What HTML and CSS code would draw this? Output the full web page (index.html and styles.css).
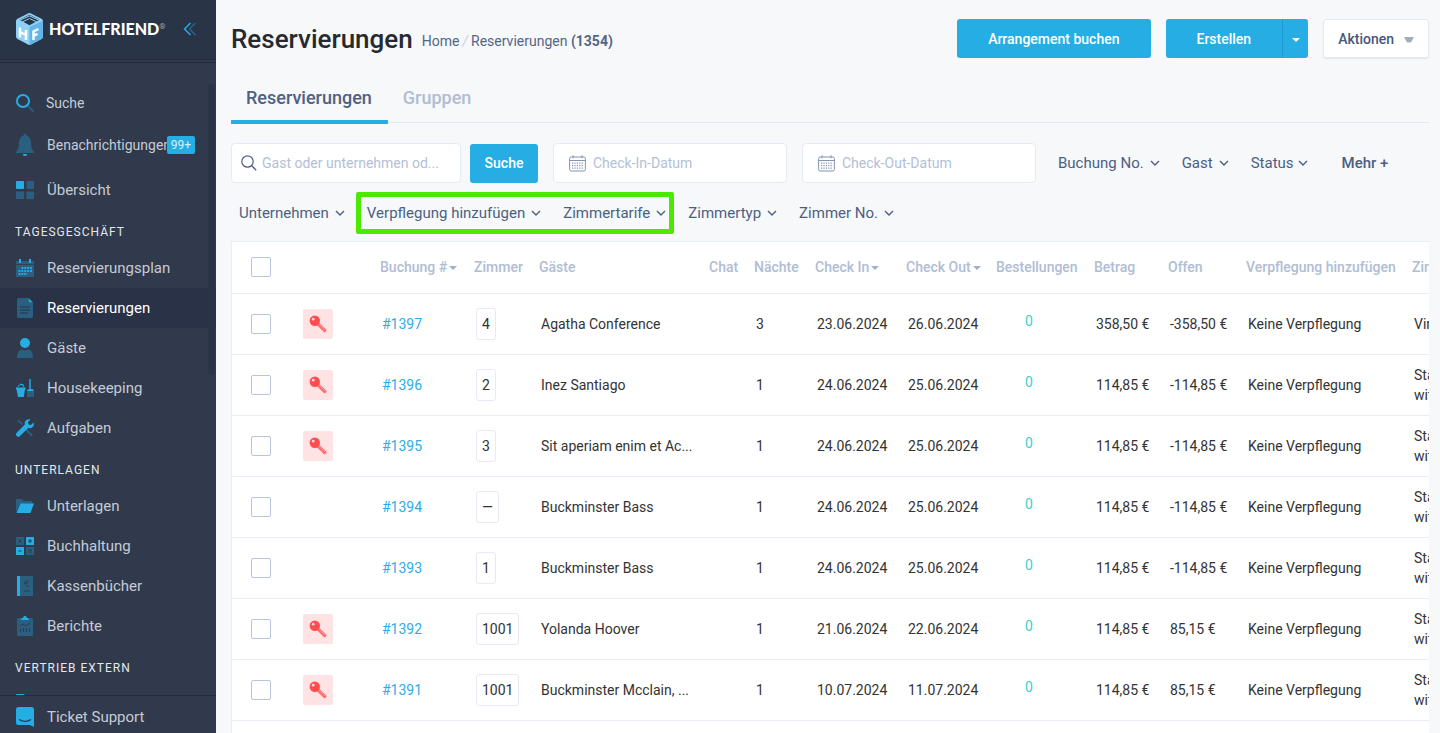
FILE: index.html
```html
<!DOCTYPE html>
<html lang="de">
<head>
<meta charset="utf-8">
<meta name="viewport" content="width=device-width, initial-scale=1">
<title>Reservierungen</title>
<link rel="stylesheet" href="styles.css">
</head>
<body>
<svg class="sprite" aria-hidden="true">
  <symbol id="chevron" viewBox="0 0 10 6"><path d="M1 1l4 4 4-4" fill="none" stroke="currentColor" stroke-width="1.4"/></symbol>
  <symbol id="caret" viewBox="0 0 8 4"><path d="M0 0h8L4 4z" fill="currentColor"/></symbol>
  <symbol id="calendar" viewBox="0 0 17 17"><rect x=".6" y="2" width="15.8" height="14" rx="1.5" fill="none" stroke="currentColor"/><path d="M1 5.5h15M4 .3v3M13 .3v3" stroke="currentColor" fill="none"/><path d="M3 8.2h11M3 10.7h11M3 13.2h11" stroke="currentColor" stroke-width="1.2" stroke-dasharray="1.2 1.2" fill="none"/></symbol>
  <symbol id="key" viewBox="0 0 18 18"><path d="M8.500 8.500l7.300 7" stroke="#ff6b6c" stroke-width="3.200" stroke-linecap="round"/><path d="M9.500 8.800l6.500 6.200" stroke="#ffa3a3" stroke-width=".8"/><circle cx="5.800" cy="5.800" r="5.200" fill="#ff4d4f"/><circle cx="4.200" cy="4.200" r="1.400" fill="#ffd5d5"/></symbol>
</svg>
<div class="app">
  <aside class="sidebar">
    <div class="brand">
      <svg class="brand-mark" viewBox="0 0 27 32" aria-hidden="true">
        <path d="M12 .4a3 3 0 0 1 3 0l10.500 5.300A2.500 2.500 0 0 1 27 8v15.500a3 3 0 0 1-1.500 2.500L15 31.600a3 3 0 0 1-3 0L1.500 26A3 3 0 0 1 0 23.500V8a2.500 2.500 0 0 1 1.500-2.300z" fill="#8fd0f5"/>
        <path d="M13.500 14L27 8v15.500a3 3 0 0 1-1.500 2.500L15 31.600l-1.500.4z" fill="#62b5e8"/>
        <path d="M13.500 1.800l10 4.900-10 5.600-10-5.600z" fill="#2a3447"/>
        <path d="M4 7.200l9.500-4.300L23 7.200M6 9l7.500-3.500L21 9" fill="none" stroke="#8fd0f5" stroke-width="1"/>
        <path d="M4 14.500v10M10 17v10M4 19l6 3M17.500 27V18.500l5-2.500M17.500 22.800l4-2" fill="none" stroke="#fff" stroke-width="2.500"/>
      </svg>
      <span class="brand-name">HOTELFRIEND<sup>®</sup></span>
      <button class="collapse" type="button" aria-label="Menü einklappen">
        <svg viewBox="0 0 14 14"><path d="M7.500 1L1.500 7l6 6" fill="none" stroke="#25ade4" stroke-width="1.500"/><path d="M12.500 1l-6 6 6 6" fill="none" stroke="#2a6487" stroke-width="1.500"/></svg>
      </button>
    </div>
    <nav class="nav">
      <a class="item item-search" href="#"><svg viewBox="0 0 18 18"><path d="M12 12l5.500 5.500" stroke="#2b5f80" stroke-width="1.800"/><circle cx="7" cy="7" r="6" fill="none" stroke="#25ade4" stroke-width="2"/></svg><span>Suche</span></a>
      <a class="item item-bell" href="#"><svg class="tall" viewBox="0 0 18 22"><path d="M9 0c.9 0 1.400.7 1.400 1.500C13.500 2.300 15 5 15 8.500c0 5 1 7 3 9.500v1H0v-1c2-2.500 3-4.500 3-9.500C3 5 4.500 2.300 7.600 1.500 7.600.7 8.100 0 9 0z" fill="#2b5f80"/><path d="M6.800 20h4.400a2.200 2 0 0 1-4.400 0z" fill="#25ade4"/></svg><span>Benachrichtigungen</span><b class="badge">99+</b></a>
      <a class="item" href="#"><svg viewBox="0 0 18 18"><rect width="8" height="8" rx="1" fill="#25ade4"/><path d="M10.500 0H17a1 1 0 0 1 1 1v7h-7.500zM0 10.500h8V18H0zM10.500 10.500H18V18h-7.500z" fill="#2b5f80"/></svg><span>Übersicht</span></a>
      <h2 class="group">TAGESGESCHÄFT</h2>
      <a class="item" href="#"><svg viewBox="0 0 18 18"><path d="M0 2h18v16H0z" fill="#2b5f80"/><path d="M0 5.500h18" stroke="#303a4c" stroke-width=".8"/><path d="M4 0v4M14 0v4" stroke="#25ade4" stroke-width="2"/><path d="M5.500 9H16M2.500 12H16M2.500 15h9" stroke="#25ade4" stroke-width="1.800" stroke-dasharray="1.900 1"/></svg><span>Reservierungsplan</span></a>
      <a class="item active" href="#" aria-current="page"><svg viewBox="0 0 18 20"><path d="M1 1.500A1.500 1.500 0 0 1 2.500 0H12v5h5v13.500a1.500 1.500 0 0 1-1.500 1.500h-13A1.500 1.500 0 0 1 1 18.500z" fill="#2b5f80"/><path d="M12.500 0L17 4.500h-4.500z" fill="#25ade4"/><path d="M4 9h10M4 12h10M4 15h8" stroke="#293246" stroke-width="1.200"/></svg><span>Reservierungen</span></a>
      <a class="item" href="#"><svg viewBox="0 0 18 20"><circle cx="9" cy="5" r="5" fill="#25ade4"/><path d="M1 20c0-6 2.500-8.500 5-8.500 2 1.200 4 1.200 6 0 2.500 0 5 2.500 5 8.500z" fill="#2b5f80"/></svg><span>Gäste</span></a>
      <a class="item" href="#"><svg viewBox="0 0 18 18"><path d="M.5 10h8.500l-1.200 8H2z" fill="#25ade4"/><path d="M0 8.500h9.500v2H0z" fill="#25ade4"/><path d="M2 8c0-3 5-3 6 0M4 5l4 1" stroke="#25ade4" fill="none"/><path d="M14 0v11" stroke="#25ade4" stroke-width="1.500"/><path d="M11 12c0-3 7-3 7 0v6h-7z" fill="#2b5f80"/><path d="M11 12c1-3 6-3 7 0z" fill="#25ade4"/></svg><span>Housekeeping</span></a>
      <a class="item" href="#"><svg viewBox="0 0 18 18"><path d="M1 2l2-1 4 4-1 1zM10 9l7 7-1.500 1.500-7-7z" fill="#2b5f80"/><path d="M17.500 3.500L15 6l-2.500-.5L12 3l2.500-2.500C11.500-.6 8 1.500 8.800 5.600L.7 13.800a2.200 2.200 0 0 0 3.300 3.300l8.200-8C16.500 9.900 18.700 6.500 17.500 3.500z" fill="#25ade4"/></svg><span>Aufgaben</span></a>
      <h2 class="group">UNTERLAGEN</h2>
      <a class="item" href="#"><svg viewBox="0 0 18 18"><path d="M0 2h6l1.500 2H16v3L4 8 0 15z" fill="#2b5f80"/><path d="M4.500 6.500H18L14.500 16H.5z" fill="#25ade4"/></svg><span>Unterlagen</span></a>
      <a class="item" href="#"><svg viewBox="0 0 18 18"><path d="M0 0h8v8H0zM10 10h8v8h-8z" fill="#2b5f80"/><path d="M10 0h8v8h-8zM0 10h8v8H0z" fill="#25ade4"/><path d="M12 4h4M14 2v4M2.500 14h3M2.500 2.500l3 3M5.500 2.500l-3 3M12 13h4M12 15h4" stroke="#303a4c" stroke-width="1"/></svg><span>Buchhaltung</span></a>
      <a class="item" href="#"><svg viewBox="0 0 18 20"><path d="M4 0h12a1 1 0 0 1 1 1v18a1 1 0 0 1-1 1H4z" fill="#2b5f80"/><path d="M1 0h3v20H1z" fill="#25ade4"/><path d="M13.500 5.500c-3-2-5 .5-4 3s3 2 4 1M8 7h4M8 15h6" stroke="#303a4c" fill="none" stroke-width="1"/></svg><span>Kassenbücher</span></a>
      <a class="item" href="#"><svg viewBox="0 0 18 20"><path d="M1 3.500A1.500 1.500 0 0 1 2.500 2h13A1.500 1.500 0 0 1 17 3.500v15a1.500 1.500 0 0 1-1.500 1.500h-13A1.500 1.500 0 0 1 1 18.500z" fill="#2b5f80"/><path d="M5 4c0-1.500 1-2 2-2 .5-2.600 3.500-2.600 4 0 1 0 2 .5 2 2z" fill="#25ade4"/><path d="M4 10l3-2 3 2 4-3M4.500 16v-3M7.500 16v-4M10.500 16v-4M13.500 16v-4" stroke="#303a4c" fill="none" stroke-width="1"/></svg><span>Berichte</span></a>
      <h2 class="group">VERTRIEB EXTERN</h2>
      <a class="item" href="#" aria-label="Vertrieb"><svg viewBox="0 0 18 20"><path d="M0 1a1 1 0 0 1 1-1h7l2 3h7v16H0z" fill="#25ade4"/></svg></a>
    </nav>
    <a class="item support" href="#"><svg viewBox="0 0 18 20"><path d="M2.500 0h13A2.500 2.500 0 0 1 18 2.500V20l-4-2H2.500A2.500 2.500 0 0 1 0 15.500v-13A2.500 2.500 0 0 1 2.500 0z" fill="#25ade4"/><path d="M3 12.500c3.500 2.600 8.500 2.600 12 0" stroke="#303a4c" fill="none" stroke-width="1.200"/></svg><span>Ticket Support</span></a>
    <i class="scroll-thumb"></i>
  </aside>

  <main class="main">
    <header class="topbar">
      <h1>Reservierungen</h1>
      <nav class="crumbs"><a href="#">Home</a><i>/</i><span>Reservierungen <b>(1354)</b></span></nav>
      <div class="actions">
        <button class="btn primary wide" type="button">Arrangement buchen</button>
        <div class="split">
          <button class="btn primary create" type="button">Erstellen</button>
          <button class="btn primary more" type="button" aria-label="Weitere Optionen"><svg><use href="#caret"/></svg></button>
        </div>
        <button class="btn ghost" type="button">Aktionen<svg viewBox="0 0 10 6"><path d="M0 0h10L7 5.500H3z" fill="currentColor"/></svg></button>
      </div>
    </header>

    <nav class="tabs"><a class="tab current" href="#">Reservierungen</a><a class="tab" href="#">Gruppen</a></nav>

    <form class="filters">
      <label class="field search"><svg viewBox="0 0 16 16"><circle cx="6.500" cy="6.500" r="5.700" fill="none" stroke="currentColor" stroke-width="1.200"/><path d="M10.700 10.700l4.500 4.500" stroke="currentColor" stroke-width="1.300"/></svg><input type="text" aria-label="Suche" placeholder="Gast oder unternehmen od..."></label>
      <button class="btn primary go" type="button">Suche</button>
      <label class="field date"><svg><use href="#calendar"/></svg><input type="text" aria-label="Check-In-Datum" placeholder="Check-In-Datum"></label>
      <label class="field date"><svg><use href="#calendar"/></svg><input type="text" aria-label="Check-Out-Datum" placeholder="Check-Out-Datum"></label>
      <div class="drops">
        <button class="drop" type="button">Buchung No.<svg><use href="#chevron"/></svg></button>
        <button class="drop" type="button">Gast<svg><use href="#chevron"/></svg></button>
        <button class="drop tight" type="button">Status<svg><use href="#chevron"/></svg></button>
        <button class="mehr" type="button">Mehr +</button>
      </div>
    </form>
    <div class="filters second">
      <button class="drop" type="button">Unternehmen<svg><use href="#chevron"/></svg></button>
      <div class="marked">
        <button class="drop" type="button">Verpflegung hinzufügen<svg><use href="#chevron"/></svg></button>
        <button class="drop" type="button">Zimmertarife<svg><use href="#chevron"/></svg></button>
      </div>
      <button class="drop" type="button">Zimmertyp<svg><use href="#chevron"/></svg></button>
      <button class="drop" type="button">Zimmer No.<svg><use href="#chevron"/></svg></button>
    </div>

    <div class="panel">
      <table>
        <colgroup><col class="c-check"><col class="c-key"><col class="c-no"><col class="c-room"><col class="c-guest"><col class="c-chat"><col class="c-nights"><col class="c-in"><col class="c-out"><col class="c-orders"><col class="c-sum"><col class="c-open"><col class="c-board"><col class="c-rate"></colgroup>
        <thead><tr><th><input type="checkbox" aria-label="Alle auswählen"></th><th></th><th>Buchung #<svg><use href="#caret"/></svg></th><th>Zimmer</th><th>Gäste</th><th>Chat</th><th>Nächte</th><th>Check In<svg><use href="#caret"/></svg></th><th>Check Out<svg><use href="#caret"/></svg></th><th>Bestellungen</th><th>Betrag</th><th>Offen</th><th>Verpflegung hinzufügen</th><th>Zimmertarife</th></tr></thead>
        <tbody>
          <tr><td><input type="checkbox" aria-label="1397"></td><td><span class="key"><svg><use href="#key"/></svg></span></td><td><a href="#">#1397</a></td><td><span class="room">4</span></td><td>Agatha Conference</td><td></td><td>3</td><td>23.06.2024</td><td>26.06.2024</td><td class="orders">0</td><td>358,50 €</td><td>-358,50 €</td><td>Keine Verpflegung</td><td>Virtual</td></tr>
          <tr><td><input type="checkbox" aria-label="1396"></td><td><span class="key"><svg><use href="#key"/></svg></span></td><td><a href="#">#1396</a></td><td><span class="room">2</span></td><td>Inez Santiago</td><td></td><td>1</td><td>24.06.2024</td><td>25.06.2024</td><td class="orders">0</td><td>114,85 €</td><td>-114,85 €</td><td>Keine Verpflegung</td><td>Standard<br>with</td></tr>
          <tr><td><input type="checkbox" aria-label="1395"></td><td><span class="key"><svg><use href="#key"/></svg></span></td><td><a href="#">#1395</a></td><td><span class="room">3</span></td><td>Sit aperiam enim et Ac...</td><td></td><td>1</td><td>24.06.2024</td><td>25.06.2024</td><td class="orders">0</td><td>114,85 €</td><td>-114,85 €</td><td>Keine Verpflegung</td><td>Standard<br>with</td></tr>
          <tr><td><input type="checkbox" aria-label="1394"></td><td></td><td><a href="#">#1394</a></td><td><span class="room">—</span></td><td>Buckminster Bass</td><td></td><td>1</td><td>24.06.2024</td><td>25.06.2024</td><td class="orders">0</td><td>114,85 €</td><td>-114,85 €</td><td>Keine Verpflegung</td><td>Standard<br>with</td></tr>
          <tr><td><input type="checkbox" aria-label="1393"></td><td></td><td><a href="#">#1393</a></td><td><span class="room">1</span></td><td>Buckminster Bass</td><td></td><td>1</td><td>24.06.2024</td><td>25.06.2024</td><td class="orders">0</td><td>114,85 €</td><td>-114,85 €</td><td>Keine Verpflegung</td><td>Standard<br>with</td></tr>
          <tr><td><input type="checkbox" aria-label="1392"></td><td><span class="key"><svg><use href="#key"/></svg></span></td><td><a href="#">#1392</a></td><td><span class="room">1001</span></td><td>Yolanda Hoover</td><td></td><td>1</td><td>21.06.2024</td><td>22.06.2024</td><td class="orders">0</td><td>114,85 €</td><td>85,15 €</td><td>Keine Verpflegung</td><td>Standard<br>with</td></tr>
          <tr><td><input type="checkbox" aria-label="1391"></td><td><span class="key"><svg><use href="#key"/></svg></span></td><td><a href="#">#1391</a></td><td><span class="room">1001</span></td><td>Buckminster Mcclain, ...</td><td></td><td>1</td><td>10.07.2024</td><td>11.07.2024</td><td class="orders">0</td><td>114,85 €</td><td>85,15 €</td><td>Keine Verpflegung</td><td>Standard<br>with</td></tr>
        </tbody>
      </table>
    </div>
  </main>
</div>
</body>
</html>
```
FILE: styles.css
```css
* { box-sizing: border-box; }
body { margin: 0; background: #f6f8fa; font: 14px/20px Roboto, "Liberation Sans", sans-serif; color: #333; }
a { color: inherit; text-decoration: none; }
button, input { font: inherit; color: inherit; }
button { border: 0; background: none; padding: 0; cursor: pointer; white-space: nowrap; }
.sprite { position: absolute; width: 0; height: 0; }
.app { display: flex; height: 100vh; overflow: hidden; }

/* Sidebar */
.sidebar { position: relative; flex: none; width: 216px; display: flex; flex-direction: column; background: #303a4c; color: #c5cbd5; }
.brand { flex: none; display: flex; align-items: center; height: 63px; padding: 0 19px 4px 16px; background: #2a3447; border-bottom: 1px solid #222c3c; box-shadow: inset 0 -2px #303a4c, inset 0 -3px #222c3c; }
.brand-mark { width: 27px; height: 32px; }
.brand-name { margin-left: 6px; font: 900 16px/20px Lato, sans-serif; color: #fff; white-space: nowrap; }
.brand-name sup { font: 8px/8px Roboto, sans-serif; vertical-align: 6px; color: #9aa5b5; }
.collapse { margin-left: auto; height: 14px; }
.collapse svg { display: block; width: 14px; height: 14px; }
.nav { flex: 1; min-height: 0; overflow: hidden; padding-top: 20px; }
.item { position: relative; flex: none; display: flex; align-items: center; gap: 13px; height: 40px; padding: 0 16px; font-size: 15px; white-space: nowrap; }
.item svg { flex: none; width: 18px; height: 20px; }
.item .tall { height: 22px; }
.item-search { margin-bottom: 2px; font-size: 14px; gap: 12px; }
.item-bell { margin-bottom: 5px; font-size: 14px; }
.active { background: #293246; color: #fff; }
.badge { position: absolute; left: 167px; top: 11px; width: 28px; border-radius: 2px; background: #25ade4; color: #d8f1fb; font-size: 12px; font-weight: 400; line-height: 18px; text-align: center; }
.group { margin: 0; height: 38px; padding: 4px 15px 0; font-size: 12px; font-weight: 400; line-height: 36px; letter-spacing: 1px; color: #e3e7ed; }
.support { height: 38px; border-top: 1px solid #222c3c; padding-top: 4px; }
.scroll-thumb { position: absolute; top: 84px; right: 1px; width: 7px; height: 291px; border-radius: 3px; background: #2a3447; }

/* Page header */
.main { flex: 1; min-width: 0; display: flex; flex-direction: column; padding: 19px 11px 0 15px; }
.topbar { display: flex; align-items: center; height: 39px; }
h1 { margin: 0; font-size: 26px; font-weight: 500; line-height: 36px; color: #262a2e; }
.crumbs { margin: 5px 0 0 9px; color: #546687; white-space: nowrap; }
.crumbs i { margin: 0 3px; color: #c9d2e0; }
.crumbs b { font-weight: 700; }
.actions { display: flex; gap: 15px; margin-left: auto; }
.btn { height: 39px; border-radius: 3px; font-weight: 500; }
.primary { background: #25ade4; color: #fff; }
.wide { padding: 0 31px; }
.split { display: flex; }
.create { padding: 0 31px; border-radius: 3px 0 0 3px; }
.more { width: 26px; border-left: 1px solid #1e9bd0; border-radius: 0 3px 3px 0; }
.more svg { width: 8px; height: 4px; vertical-align: middle; }
.ghost { padding: 0 14px; border: 1px solid #e6eaf0; background: #fff; color: #46587a; box-shadow: 0 1px 1px #e3e7ec; }
.ghost svg { width: 10px; height: 6px; margin-left: 10px; color: #a3adbf; vertical-align: middle; }

.tabs { display: flex; margin-top: 15px; height: 51px; box-shadow: inset 0 -1px #f6f8fa, inset 0 -2px #e4e9f2; }
.tab { padding: 15px 16px 0 15px; font-size: 18px; font-weight: 500; color: #b0bdd3; }
.tab.current { color: #4f6184; border-bottom: 4px solid #25ade4; }

/* Filters */
.filters { display: flex; align-items: center; margin-top: 19px; color: #4c5f82; }
.field { display: flex; align-items: center; height: 40px; border: 1px solid #e6eaf2; border-radius: 4px; background: #fff; }
.field input { flex: 1; min-width: 0; border: 0; padding: 0; background: none; outline: 0; }
.field input::placeholder { color: #b3c0d6; opacity: 1; }
.search { width: 230px; padding: 0 9px; gap: 5px; }
.search svg { width: 16px; height: 16px; }
.date { width: 234px; padding: 0 15px; gap: 7px; margin-left: 15px; }
.date svg { width: 17px; height: 17px; color: #8494b0; }
.go { width: 68px; margin-left: 9px; }
.drops { display: flex; align-items: center; gap: 22px; margin-left: 22px; }
.drop { display: flex; align-items: center; gap: 6px; font-size: 15px; }
.drop svg { width: 10px; height: 6px; }
.tight { gap: 4px; }
.mehr { margin-left: 12px; font-size: 15px; font-weight: 500; }
.second { height: 20px; margin-top: 20px; padding-left: 8px; gap: 22px; }
.marked { position: relative; display: flex; gap: 22px; }
.marked::after { content: ""; position: absolute; inset: -11px -8px -11px -11px; border: 5px solid #4be800; border-radius: 2px; pointer-events: none; }

/* Table */
.panel { flex: 1; min-height: 0; margin-top: 18px; overflow: hidden; border: 1px solid #e9edf4; border-right: 0; border-bottom: 0; background: #fff; }
table { width: 1332px; table-layout: fixed; border-collapse: collapse; }
th, td { padding: 0 0 0 10px; text-align: left; white-space: nowrap; border-bottom: 1px solid #e9edf5; }
th { height: 51px; padding-left: 8px; font-weight: 500; color: #b0bdd3; }
th svg { width: 8px; height: 4px; margin-left: 2px; vertical-align: 2px; color: #9fb0cc; }
td { height: 61px; }
td a { color: #2cade6; }
th:first-child, td:first-child { padding-left: 19px; }
input[type="checkbox"] { appearance: none; display: block; width: 20px; height: 20px; margin: 0; border: 1px solid #b8c4da; border-radius: 2px; background: #fff; }
.c-check { width: 61px; } .c-key { width: 79px; } .c-no { width: 94px; } .c-room { width: 65px; } .c-guest { width: 170px; }
.c-chat { width: 45px; } .c-nights { width: 61px; } .c-in { width: 91px; } .c-out { width: 90px; } .c-orders { width: 98px; }
.c-sum { width: 74px; } .c-open { width: 78px; } .c-board { width: 166px; } .c-rate { width: 160px; }
.key { display: flex; align-items: center; justify-content: center; width: 30px; height: 30px; border-radius: 2px; background: #ffe3e4; }
.key svg { width: 18px; height: 18px; }
.room { display: inline-block; padding: 5px; border: 1px solid #e6eaf2; border-radius: 3px; }
.orders { padding: 0 0 6px 37px; color: #3ccfcf; }
```
